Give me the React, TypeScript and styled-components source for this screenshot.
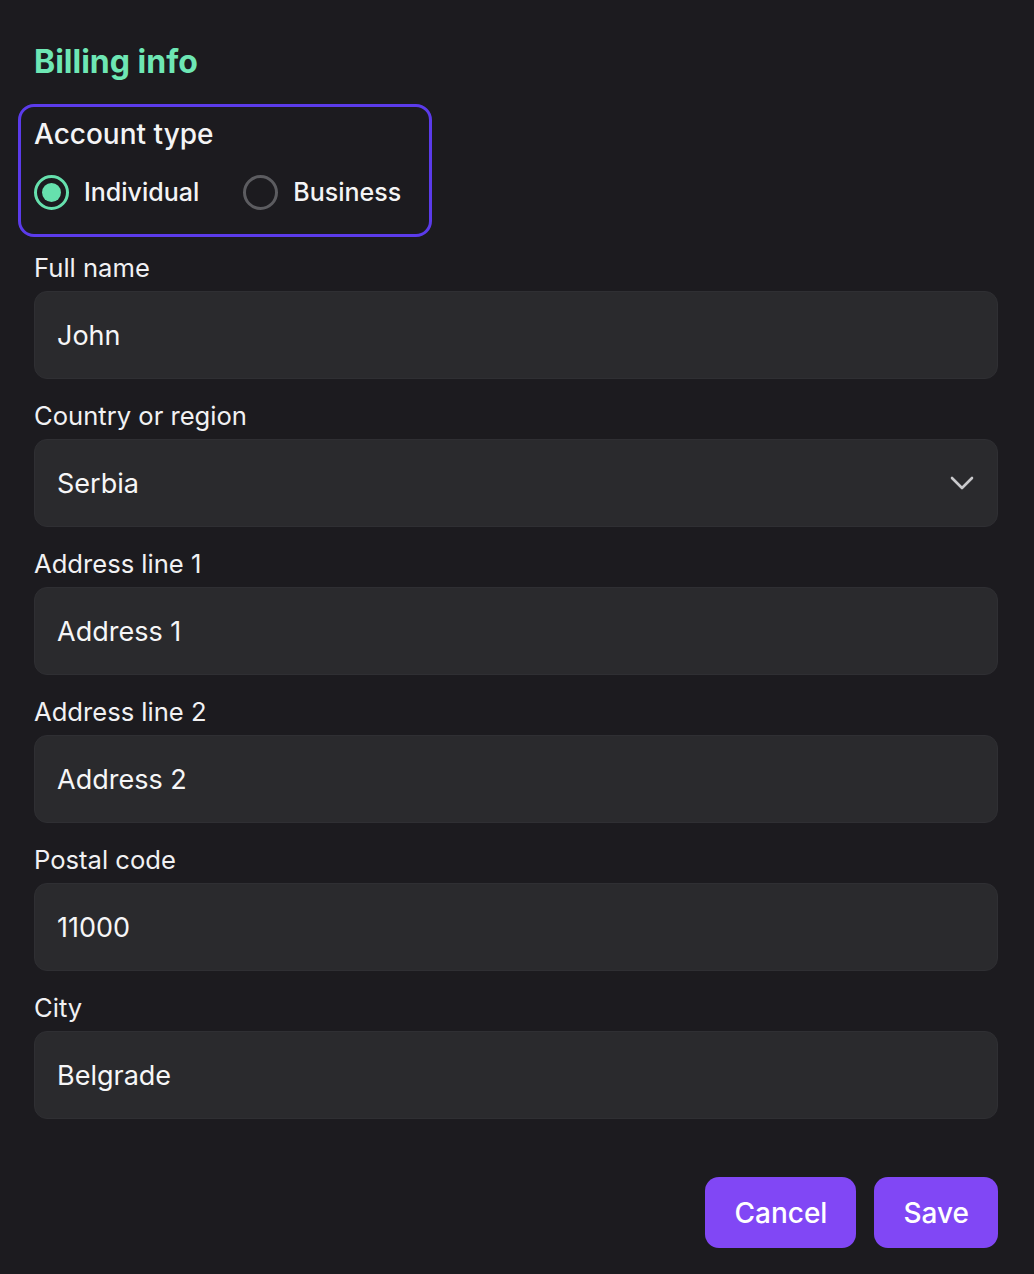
import * as React from 'react'
import styled, { createGlobalStyle } from 'styled-components'

const GlobalStyle = createGlobalStyle`
  html, body {
    margin: 0;
    padding: 0;
    background: #1c1b1f;
  }
  body {
    font-family: Inter, "Noto Sans", sans-serif;
    color: #f4f4f5;
  }
`

const Page = styled.form`
  display: flex;
  flex-direction: column;
  padding: 41px 36px 26px 34px;
  min-height: 1274px;
  box-sizing: border-box;
`

const Title = styled.h1`
  margin: 0 0 21px 0;
  font-size: 32px;
  line-height: 42px;
  font-weight: 700;
  color: #6ee7b4;
`

const AccountBox = styled.fieldset`
  margin: 0 0 14px -16px;
  width: 414px;
  box-sizing: border-box;
  border: 3px solid #5b3bea;
  border-radius: 16px;
  padding: 9px 20px 24px 13px;
`

const Legend = styled.div`
  font-size: 28px;
  line-height: 36px;
  font-weight: 500;
  margin-bottom: 22px;
`

const RadioRow = styled.div`
  display: flex;
  align-items: center;
  gap: 44px;
`

const RadioLabel = styled.label`
  display: flex;
  align-items: center;
  gap: 15px;
  font-size: 25px;
  line-height: 36px;
  font-weight: 500;
  cursor: pointer;
`

const RadioDot = styled.span<{ $checked: boolean }>`
  width: 35px;
  height: 35px;
  box-sizing: border-box;
  border-radius: 50%;
  border: 3px solid ${p => (p.$checked ? '#66e0ad' : '#5c5c60')};
  display: flex;
  align-items: center;
  justify-content: center;
  &::after {
    content: '';
    width: 19px;
    height: 19px;
    border-radius: 50%;
    background: ${p => (p.$checked ? '#66e0ad' : 'transparent')};
  }
`

const Field = styled.div`
  display: flex;
  flex-direction: column;
  gap: 6px;
  margin-bottom: 20px;
`

const Label = styled.label`
  font-size: 25.6px;
  line-height: 34px;
  color: #f1f1f3;
`

const InputBox = styled.div`
  height: 88px;
  box-sizing: border-box;
  background: #2a2a2d;
  border: 1px solid #2f2f33;
  border-radius: 13px;
  display: flex;
  align-items: center;
  padding: 0 22px;
`

const Value = styled.span`
  font-size: 27px;
  color: #f6f6f7;
  flex: 1;
`

const Chevron = styled.svg`
  width: 24px;
  height: 14px;
  margin-right: 1px;
`

const Actions = styled.div`
  display: flex;
  justify-content: flex-end;
  gap: 18px;
  margin-top: 38px;
`

const Button = styled.button`
  height: 71px;
  padding: 0 29px;
  border: none;
  border-radius: 14px;
  background: #8147f5;
  color: #ffffff;
  font-family: Inter, sans-serif;
  font-size: 28px;
  font-weight: 500;
  cursor: pointer;
`

const fields = [
  { label: 'Full name', value: 'John' },
  { label: 'Country or region', value: 'Serbia', select: true },
  { label: 'Address line 1', value: 'Address 1' },
  { label: 'Address line 2', value: 'Address 2' },
  { label: 'Postal code', value: '11000' },
  { label: 'City', value: 'Belgrade' },
]

export default function App() {
  const [type, setType] = React.useState('individual')

  return (
    <>
      <GlobalStyle />
      <Page onSubmit={e => e.preventDefault()}>
        <Title>Billing info</Title>
        <AccountBox>
          <Legend>Account type</Legend>
          <RadioRow>
            <RadioLabel onClick={() => setType('individual')}>
              <RadioDot $checked={type === 'individual'} />
              Individual
            </RadioLabel>
            <RadioLabel onClick={() => setType('business')}>
              <RadioDot $checked={type === 'business'} />
              Business
            </RadioLabel>
          </RadioRow>
        </AccountBox>

        {fields.map(f => (
          <Field key={f.label}>
            <Label>{f.label}</Label>
            <InputBox>
              <Value>{f.value}</Value>
              {f.select && (
                <Chevron viewBox="0 0 24 14" fill="none">
                  <path d="M2 2l10 10 10-10" stroke="#c9c9cc" strokeWidth="2.6" strokeLinecap="round" strokeLinejoin="round" />
                </Chevron>
              )}
            </InputBox>
          </Field>
        ))}

        <Actions>
          <Button type="button">Cancel</Button>
          <Button type="submit">Save</Button>
        </Actions>
      </Page>
    </>
  )
}
